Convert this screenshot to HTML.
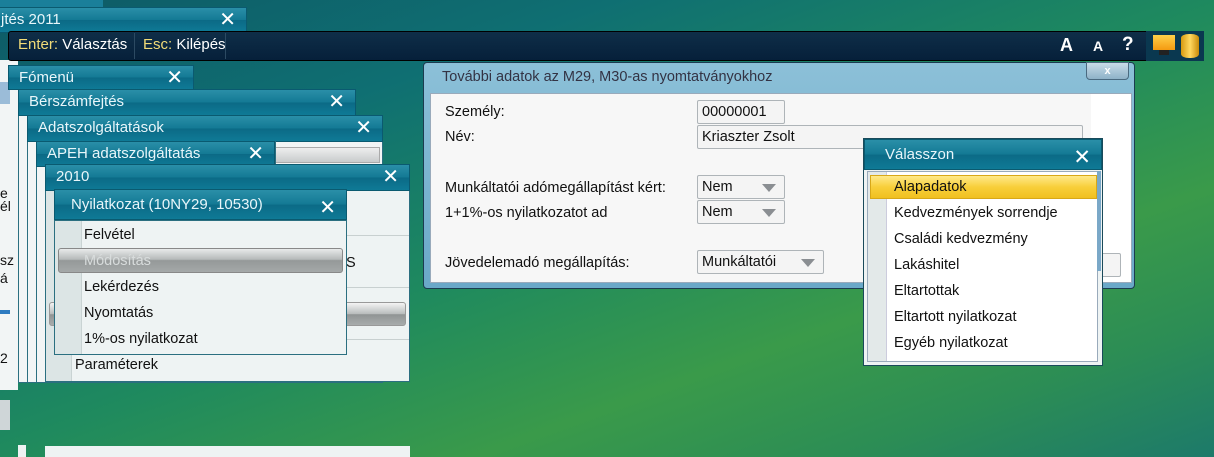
<!DOCTYPE html>
<html><head><meta charset="utf-8"><style>
*{margin:0;padding:0;box-sizing:border-box}
body{width:1214px;height:457px;overflow:hidden;position:relative;font-family:"Liberation Sans",sans-serif;font-size:14px;color:#111;
background:linear-gradient(160deg,#0e5a66 0%,#0f6f72 25%,#1f8a5e 50%,#3a9a4a 70%,#2c8d55 85%,#1d7a6a 100%);}
.a{position:absolute}
.tb{position:absolute;background:linear-gradient(#2a8fa8,#137994 50%,#0b6a86 51%,#0f7a96);color:#e8f6fa;font-size:15px;padding-left:10px;line-height:24px;border:1px solid #0a5a70}
.x{position:absolute;right:10px;top:0;font-size:20px;color:#fff}
.body{position:absolute;background:#eef3f3;border:1px solid #2b6f80}
.mi{position:absolute;left:0;right:0;height:26px;line-height:26px;padding-left:29px;font-size:14.5px}
.gut{position:absolute;left:0;top:0;bottom:0;width:27px;background:#dce5e5;border-right:1px solid #c9d3d3}
.fld{position:absolute;background:#f4f4f4;border:1px solid #aeb4b8;border-radius:2px;padding-left:4px;line-height:22px;height:24px;font-size:14.5px}
.arr{position:absolute;right:8px;top:8px;width:0;height:0;border-left:7px solid transparent;border-right:7px solid transparent;border-top:8px solid #8a8e92}
</style></head><body>
<div class="a" style="left:0;top:0;width:103px;height:8px;background:#1a7f9a"></div>
<div class="tb" style="left:-10px;top:7px;width:257px;height:26px">jtés 2011<span class="x">✕</span></div>
<div class="a" style="left:0;top:60px;width:18px;height:330px;background:#f2f5f5"></div>
<div class="a" style="left:0;top:82px;width:10px;height:22px;background:#9bbcd8"></div>
<div class="a" style="left:0;top:310px;width:10px;height:4px;background:#2e7bc0"></div>
<div class="a" style="left:0;top:400px;width:10px;height:30px;background:#cfd6d8"></div>
<div class="a" style="left:0;top:185px;font-size:14px">e</div>
<div class="a" style="left:0;top:198px;font-size:14px">él</div>
<div class="a" style="left:0;top:252px;font-size:14px">sz</div>
<div class="a" style="left:0;top:270px;font-size:14px">á</div>
<div class="a" style="left:0;top:350px;font-size:14px">2</div>
<div class="a" style="left:8px;top:31px;width:1196px;height:30px;background:linear-gradient(#0f2e48,#06203a);border:1px solid #000;border-radius:3px"></div>
<div class="a" style="left:18px;top:36px;font-size:15px;color:#fff"><span style="color:#f2dc78">Enter:</span> Választás</div>
<div class="a" style="left:134px;top:33px;width:1px;height:26px;background:#2c4a62"></div>
<div class="a" style="left:143px;top:36px;font-size:15px;color:#fff"><span style="color:#f2dc78">Esc:</span> Kilépés</div>
<div class="a" style="left:225px;top:33px;width:1px;height:26px;background:#2c4a62"></div>
<div class="a" style="left:1060px;top:35px;font-size:18px;color:#fff;font-weight:bold">A</div>
<div class="a" style="left:1093px;top:38px;font-size:14px;color:#fff;font-weight:bold">A</div>
<div class="a" style="left:1122px;top:34px;font-size:19px;color:#fff;font-weight:bold">?</div>
<div class="a" style="left:1146px;top:31px;width:58px;height:30px;background:#0a3850"></div>
<div class="a" style="left:1153px;top:35px;width:22px;height:15px;background:linear-gradient(#ffd04a,#f59a10)"></div>
<div class="a" style="left:1159px;top:50px;width:10px;height:5px;background:#222"></div>
<div class="a" style="left:1181px;top:34px;width:18px;height:24px;border-radius:8px/4px;background:linear-gradient(90deg,#d89a10,#ffd860,#c88a08)"></div>
<div class="tb" style="left:8px;top:65px;width:186px;height:25px">Fómenü<span class="x">✕</span></div>
<div class="body" style="left:18px;top:90px;width:338px;height:293px;background:#f2f5f5"></div>
<div class="tb" style="left:18px;top:89px;width:338px;height:27px">Bérszámfejtés<span class="x">✕</span></div>
<div class="body" style="left:27px;top:116px;width:356px;height:267px;background:#f2f5f5"></div>
<div class="tb" style="left:27px;top:115px;width:356px;height:27px">Adatszolgáltatások<span class="x">✕</span></div>
<div class="a" style="left:274px;top:147px;width:106px;height:16px;background:linear-gradient(#eee,#c8cbcc);border:1px solid #aaa"></div>
<div class="body" style="left:36px;top:141px;width:240px;height:242px;background:#f2f5f5"></div>
<div class="tb" style="left:36px;top:141px;width:239px;height:26px">APEH adatszolgáltatás<span class="x">✕</span></div>
<div class="body" style="left:45px;top:166px;width:365px;height:216px;background:#eef3f3">
 <div class="gut" style="width:26px"></div>
 <div class="a" style="left:27px;top:68px;right:0;height:1px;background:#c8d0d0"></div>
 <div class="a" style="left:27px;top:120px;right:0;height:1px;background:#c8d0d0"></div>
 <div class="a" style="left:3px;top:135px;right:3px;height:24px;background:linear-gradient(#f4f4f4,#b8bcbc 50%,#909494 52%,#a8acac);border:1px solid #999;border-radius:3px"></div>
 <div class="a" style="left:27px;top:172px;right:0;height:1px;background:#c8d0d0"></div>
 <div class="a" style="left:29px;top:190px;font-size:14.5px">Paraméterek</div>
 <div class="a" style="left:300px;top:88px;font-size:14.5px">S</div>
</div>
<div class="tb" style="left:45px;top:164px;width:365px;height:27px">2010<span class="x">✕</span></div>
<div class="body" style="left:54px;top:220px;width:293px;height:135px;background:#eef3f3">
 <div class="gut"></div>
 <div class="mi" style="top:1px">Felvétel</div>
 <div class="a" style="left:3px;top:27px;right:3px;height:25px;background:linear-gradient(#e8eaea,#b6baba 45%,#959999 50%,#a4a8a8);border:1px solid #888;border-radius:3px"></div>
 <div class="mi" style="top:27px;color:#d8dcdc">Módosítás</div>
 <div class="mi" style="top:53px">Lekérdezés</div>
 <div class="mi" style="top:79px">Nyomtatás</div>
 <div class="mi" style="top:105px">1%-os nyilatkozat</div>
</div>
<div class="tb" style="left:54px;top:189px;width:293px;height:31px;line-height:30px;padding-left:16px">Nyilatkozat (10NY29, 10530)<span class="x" style="top:3px">✕</span></div>
<div class="a" style="left:45px;top:446px;width:365px;height:11px;background:#eef3f3"></div>
<div class="a" style="left:18px;top:445px;width:8px;height:12px;background:#eef3f3"></div>
<div class="a" style="left:423px;top:62px;width:712px;height:227px;background:linear-gradient(#8cc0d8,#6aa8c8);border:1px solid #1c3c50;border-radius:4px"></div>
<div class="a" style="left:442px;top:69px;font-size:14.5px;color:#334">További adatok az M29, M30-as nyomtatványokhoz</div>
<div class="a" style="left:1086px;top:62px;width:43px;height:18px;background:linear-gradient(#c8dce8,#8eb2c8);border:1px solid #4a6a80;border-radius:0 0 4px 4px;color:#fff;text-align:center;font-size:11px;font-weight:bold;line-height:16px">x</div>
<div class="a" style="left:430px;top:93px;width:702px;height:190px;background:#fff;border:1px solid #9ab">
 <div class="a" style="left:0;top:0;width:660px;height:188px;background:#f7f7f7"></div>
</div>
<div class="a" style="left:445px;top:104px;font-size:14.5px">Személy:</div>
<div class="a" style="left:445px;top:129px;font-size:14.5px">Név:</div>
<div class="a" style="left:445px;top:180px;font-size:14.5px">Munkáltatói adómegállapítást kért:</div>
<div class="a" style="left:445px;top:205px;font-size:14.5px">1+1%-os nyilatkozatot ad</div>
<div class="a" style="left:445px;top:255px;font-size:14.5px">Jövedelemadó megállapítás:</div>
<div class="fld" style="left:697px;top:100px;width:88px">00000001</div>
<div class="fld" style="left:697px;top:125px;width:386px">Kriaszter Zsolt</div>
<div class="fld" style="left:697px;top:175px;width:88px">Nem<span class="arr"></span></div>
<div class="fld" style="left:697px;top:200px;width:88px">Nem<span class="arr"></span></div>
<div class="fld" style="left:697px;top:250px;width:127px">Munkáltatói<span class="arr"></span></div>
<div class="fld" style="left:1095px;top:253px;width:26px;height:24px"></div>
<div class="a" style="left:863px;top:138px;width:240px;height:228px;background:#eef3f3;border:1px solid #1a4a5a"></div>
<div class="tb" style="left:864px;top:139px;width:238px;height:31px;line-height:30px;padding-left:20px;font-size:15px">Válasszon<span class="x" style="top:3px;font-size:21px">✕</span></div>
<div class="a" style="left:867px;top:171px;width:231px;height:191px;background:#fff;border:1px solid #9ab">
 <div class="a" style="left:0;top:0;bottom:0;width:19px;background:#e3e9e9;border-right:1px solid #ccd"></div>
 <div class="a" style="left:2px;top:3px;right:0;height:24px;background:linear-gradient(#ffe98a,#f8cf3a 50%,#f0c020);border:1px solid #d8a818"></div>
 <div class="a" style="left:26px;top:6px;font-size:14.5px;line-height:18px">Alapadatok<br><div style="margin-top:8px">Kedvezmények sorrendje</div><div style="margin-top:8px">Családi kedvezmény</div><div style="margin-top:8px">Lakáshitel</div><div style="margin-top:8px">Eltartottak</div><div style="margin-top:8px">Eltartott nyilatkozat</div><div style="margin-top:8px">Egyéb nyilatkozat</div></div>
</div>
<div class="a" style="left:1097px;top:171px;width:4px;height:100px;background:#7aa8c8"></div>
</body></html>
